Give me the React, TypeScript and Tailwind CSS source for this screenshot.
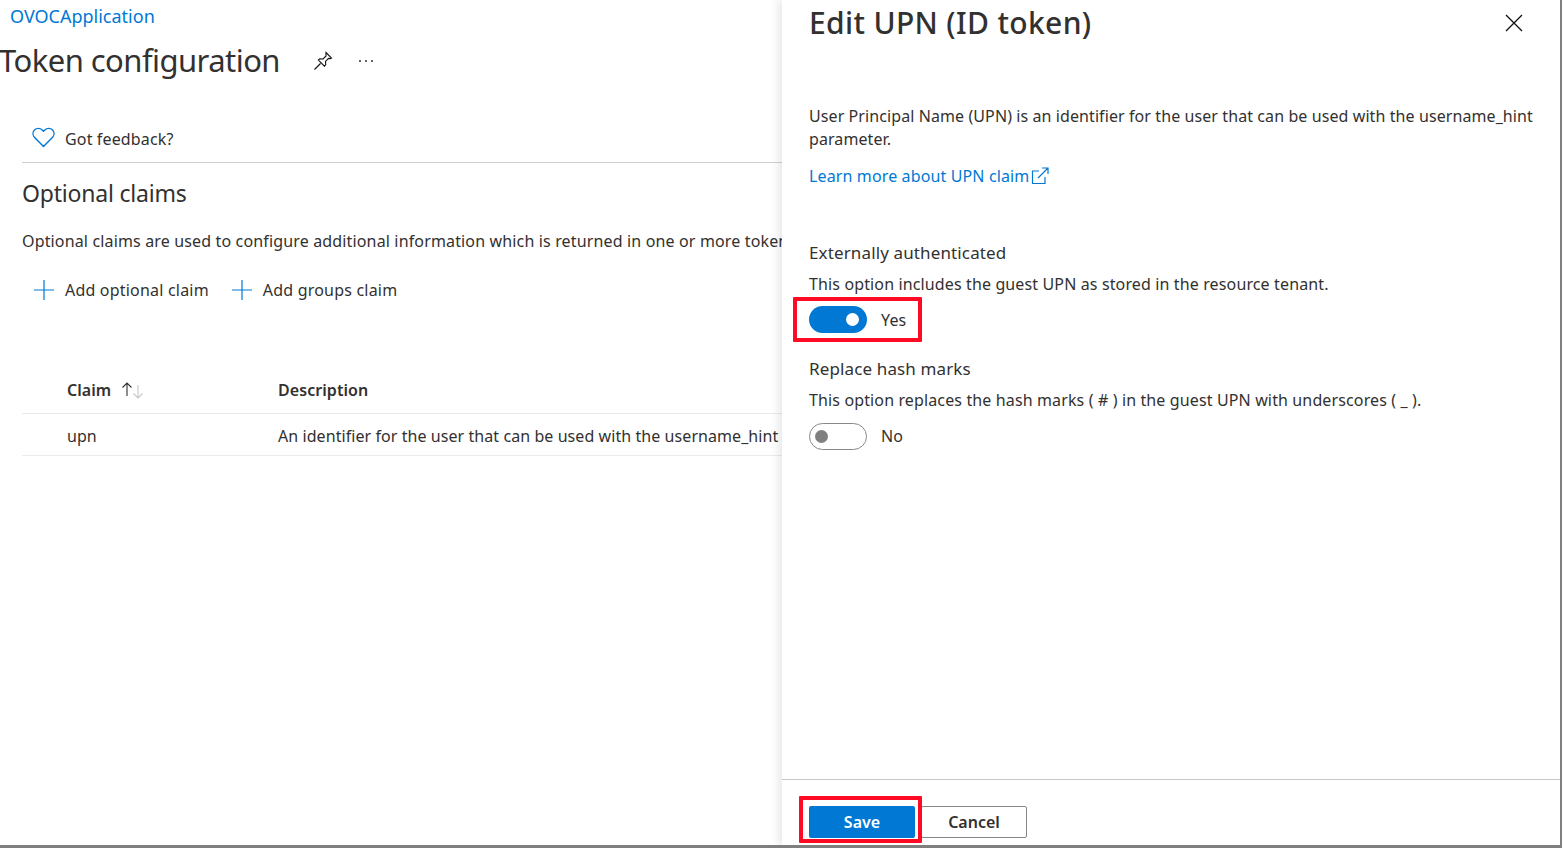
import React from "react";

function Plus() {
  return (
    <svg width="22" height="22" viewBox="0 0 22 22" className="shrink-0">
      <path d="M11 1v20M1 11h20" stroke="#0078d4" strokeWidth="1.2" fill="none" />
    </svg>
  );
}

function Toggle({ on }: { on: boolean }) {
  return (
    <div
      className={
        on
          ? "flex h-[27px] w-[58px] items-center justify-end rounded-full bg-[#0078d4] pr-[8px]"
          : "flex h-[27px] w-[58px] items-center justify-start rounded-full border border-[#8a8886] bg-white pl-[5px]"
      }
    >
      <div className={on ? "h-[13px] w-[13px] rounded-full bg-white" : "h-[13px] w-[13px] rounded-full bg-[#808080]"} />
    </div>
  );
}

export default function App() {
  return (
    <div className="flex h-[848px] w-[1562px] flex-col overflow-hidden bg-white font-['Noto_Sans','Open_Sans',sans-serif] text-[#323130]">
      <div className="flex min-h-0 flex-1">
        {/* Left blade */}
        <div className="w-[782px] shrink-0 overflow-hidden">
          <a className="ml-[10px] block h-[33px] text-[18px] leading-[33px] text-[#0078d4]">OVOCApplication</a>
          <div className="flex h-[56px] items-center">
            <h1 className="-ml-px mb-[2px] text-[31px] font-normal leading-[54px] tracking-[-0.55px]">Token configuration</h1>
            <svg width="20" height="20" viewBox="0 0 20 20" className="ml-[33px] shrink-0" fill="none" stroke="#111" strokeWidth="1.1">
              <path d="M13 1.500l5.500 5.500-1.200.6-1.800-.2-3 3 .2 3.400-1.300 1.300-6-6 1.300-1.300 3.400.2 3-3-.2-1.800zM7.500 12.500L1.500 18.500" />
            </svg>
            <svg width="16" height="4" viewBox="0 0 16 4" className="ml-[25px] shrink-0" fill="#323130">
              <circle cx="2" cy="2" r="1" />
              <circle cx="8" cy="2" r="1" />
              <circle cx="14" cy="2" r="1" />
            </svg>
          </div>
          <div className="ml-[22px] mt-[27px] tracking-[0.15px]">
            <div className="flex h-[47px] items-center border-b border-[#d2d0ce]">
              <svg width="23" height="21" viewBox="0 0 23 21" className="mb-[3px] ml-[10px] shrink-0" fill="none" stroke="#0078d4" strokeWidth="1.4">
                <path d="M11.500 19.500L2.600 10.400A5.400 5.400 0 0 1 2.400 3a5.500 5.500 0 0 1 7.800 0l1.300 1.300L12.800 3a5.500 5.500 0 0 1 7.800 0 5.400 5.400 0 0 1-.2 7.400z" />
              </svg>
              <span className="ml-[10px] text-[16px]">Got feedback?</span>
            </div>
            <h2 className="mt-[13px] text-[23px] font-normal leading-[34px] tracking-[-0.2px]">Optional claims</h2>
            <p className="mt-[19px] whitespace-nowrap text-[16px] leading-[24px]">
              Optional claims are used to configure additional information which is returned in one or more tokens.
            </p>
            <div className="ml-[11px] mt-[25px] flex h-[24px] items-center tracking-[0.2px]">
              <Plus />
              <span className="ml-[10px] text-[16px]">Add optional claim</span>
              <div className="ml-[22px]">
                <Plus />
              </div>
              <span className="ml-[10px] text-[16px]">Add groups claim</span>
            </div>
            <div className="mt-[65px] flex h-[47px] items-center border-b border-[#edebe9] font-semibold tracking-[0.06px]">
              <span className="ml-[45px] w-[44px] shrink-0 text-[16px]">Claim</span>
              <svg width="24" height="18" viewBox="0 0 24 18" className="ml-[10px] shrink-0" fill="none" strokeWidth="1.1">
                <path d="M6 15V2M1.500 6.500L6 2l4.500 4.500" stroke="#323130" />
                <path d="M17 4v13M12.500 12.500L17 17l4.500-4.500" stroke="#c8c6c4" />
              </svg>
              <span className="ml-[133px] text-[16px]">Description</span>
            </div>
            <div className="flex h-[42px] items-center whitespace-nowrap border-b border-[#edebe9] pt-[2px] text-[16px] tracking-[0.07px]">
              <span className="ml-[45px] w-[211px] shrink-0">upn</span>
              <span>An identifier for the user that can be used with the username_hint parameter</span>
            </div>
          </div>
        </div>

        {/* Right panel */}
        <div className="flex min-w-0 flex-1 flex-col bg-white shadow-[-4px_0_8px_rgba(0,0,0,0.09)]">
          <div className="flex h-[46px] items-start justify-between pl-[27px] pr-[37px]">
            <h2 className="text-[30px] font-medium leading-[46px] tracking-[0.35px]">Edit UPN (ID token)</h2>
            <svg width="18" height="18" viewBox="0 0 18 18" className="mt-[14px] shrink-0" fill="none" stroke="#111" strokeWidth="1.3">
              <path d="M1 1l16 16M17 1L1 17" />
            </svg>
          </div>
          <div className="min-h-0 flex-1 pl-[27px] pr-[24px] text-[16px] tracking-[0.13px]">
            <p className="mt-[59px] leading-[23px] tracking-[0.09px]">
              User Principal Name (UPN) is an identifier for the user that can be used with the username_hint parameter.
            </p>
            <a className="mt-[13px] flex h-[24px] items-center text-[#0078d4]">
              Learn more about UPN claim
              <svg width="18" height="18" viewBox="0 0 18 18" className="ml-[2px] shrink-0" fill="none" stroke="#0078d4" strokeWidth="1.2">
                <path d="M8 4H1.500v12.500h12.500V10M7 11L17 1M11 1h6v6" />
              </svg>
            </a>
            <div className="mt-[53px] text-[17px] leading-[24px]">Externally authenticated</div>
            <p className="mt-[7px] leading-[24px]">This option includes the guest UPN as stored in the resource tenant.</p>
            <div className="relative mt-[10px] flex h-[27px] items-center">
              <Toggle on />
              <span className="ml-[14px]">Yes</span>
              <div className="absolute -left-[16px] -top-[9px] h-[45px] w-[129px] rounded-[1px] border-[4px] border-[#ff0a24]" />
            </div>
            <div className="mt-[24px] text-[17px] leading-[24px]">Replace hash marks</div>
            <p className="mt-[7px] leading-[24px]">This option replaces the hash marks ( # ) in the guest UPN with underscores ( _ ).</p>
            <div className="mt-[11px] flex h-[27px] items-center">
              <Toggle on={false} />
              <span className="mb-[2px] ml-[14px]">No</span>
            </div>
          </div>
          <div className="flex h-[66px] items-start border-t border-[#c8c6c4] pl-[27px] pt-[26px] text-[16px]">
            <div className="relative z-10">
              <button className="h-[32px] w-[106px] rounded-[2px] bg-[#0078d4] font-semibold text-white">Save</button>
              <div className="absolute -left-[10px] -top-[10px] h-[47px] w-[123px] rounded-[1px] border-[4px] border-[#ff0a24]" />
            </div>
            <button className="ml-[6px] h-[32px] w-[106px] rounded-[2px] border border-[#8a8886] bg-white font-semibold">Cancel</button>
          </div>
        </div>
        <div className="w-[2px] shrink-0 bg-[#7f7f7f]" />
      </div>
      <div className="h-[3px] shrink-0 bg-[#7f7f7f]" />
    </div>
  );
}
